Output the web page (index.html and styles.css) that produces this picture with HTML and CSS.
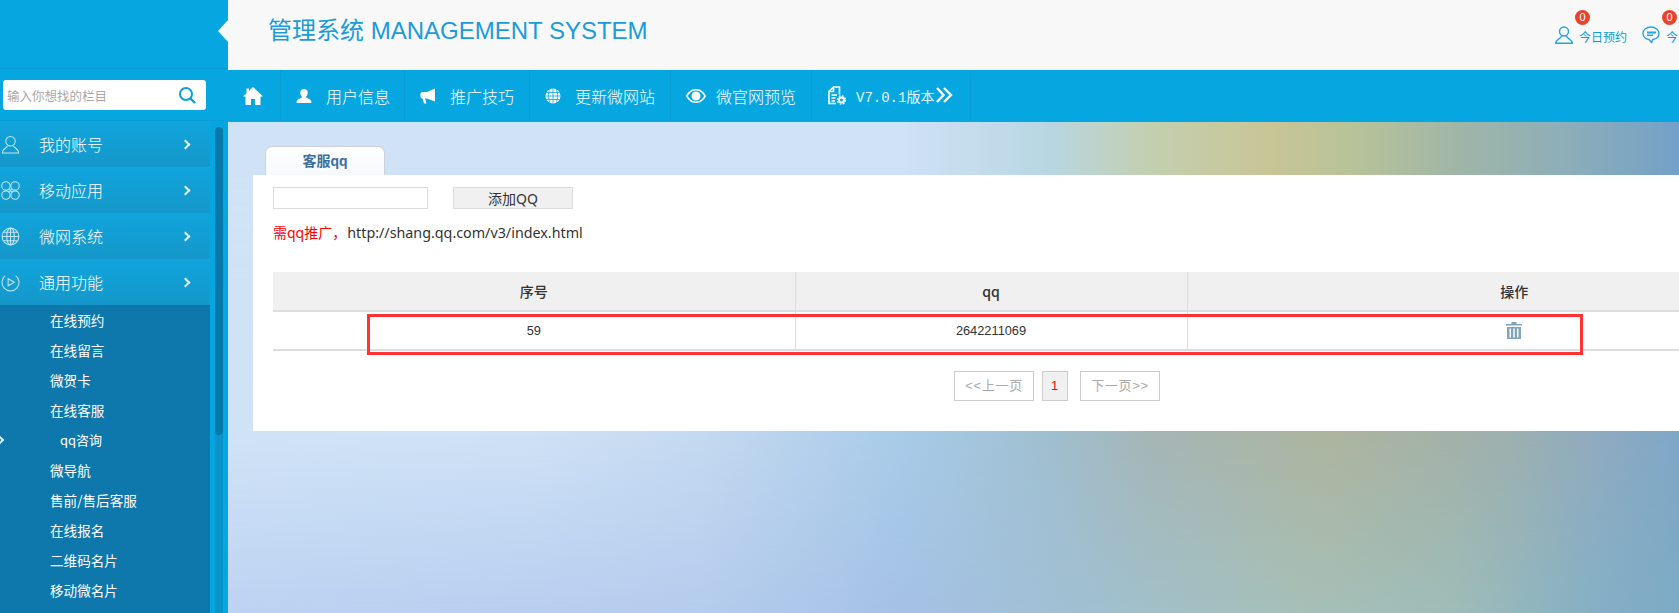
FILE: index.html
```html
<!DOCTYPE html>
<html lang="zh-CN">
<head>
<meta charset="utf-8">
<title>管理系统</title>
<link rel="stylesheet" href="styles.css">
</head>
<body>
<div class="app">
  <aside class="sidebar">
    <div class="logo-area"></div>
    <div class="search-area">
      <div class="search">
        <span class="search-text">输入你想找的栏目</span>
        <svg class="search-icon" viewBox="0 0 18 18" width="18" height="18"><circle cx="8" cy="8" r="6" fill="none" stroke="#06a0dc" stroke-width="2"/><path d="M12.5 12.5L17 17" stroke="#06a0dc" stroke-width="2.4" fill="none"/></svg>
      </div>
    </div>
    <div class="side-body">
      <nav class="menu">
        <a class="menu-item">
          <svg class="menu-icon" viewBox="0 0 20 20"><circle cx="10" cy="6.500" r="5"/><path d="M7 11.500C6 14 1.500 14 1.500 19H18.500C18.500 14 14 14 13 11.500"/></svg>
          <span class="menu-label">我的账号</span><span class="chev"></span>
        </a>
        <a class="menu-item">
          <svg class="menu-icon" viewBox="0 0 20 20"><circle cx="5.200" cy="5.200" r="4.400"/><circle cx="14.800" cy="5.200" r="4.400"/><circle cx="5.200" cy="14.800" r="4.400"/><circle cx="14.800" cy="14.800" r="4.400"/><path d="M8 8L12 12M12 8L8 12"/></svg>
          <span class="menu-label">移动应用</span><span class="chev"></span>
        </a>
        <a class="menu-item">
          <svg class="menu-icon" viewBox="0 0 20 20"><circle cx="10" cy="10" r="8.800"/><ellipse cx="10" cy="10" rx="4" ry="8.800"/><path d="M10 1.200V18.800M1.200 10H18.800M2.500 5.500H17.500M2.500 14.500H17.500"/></svg>
          <span class="menu-label">微网系统</span><span class="chev"></span>
        </a>
        <a class="menu-item">
          <svg class="menu-icon" viewBox="0 0 20 20"><path d="M15.500 2.800A9 9 0 1 1 4.500 2.800"/><path d="M7.500 6V13.500L14 9.800Z"/></svg>
          <span class="menu-label">通用功能</span><span class="chev"></span>
        </a>
        <ul class="submenu">
          <li class="sub-item">在线预约</li>
          <li class="sub-item">在线留言</li>
          <li class="sub-item">微贺卡</li>
          <li class="sub-item">在线客服</li>
          <li class="sub-item sub-current"><span class="sub-mark"></span>qq咨询</li>
          <li class="sub-item">微导航</li>
          <li class="sub-item">售前/售后客服</li>
          <li class="sub-item">在线报名</li>
          <li class="sub-item">二维码名片</li>
          <li class="sub-item">移动微名片</li>
        </ul>
      </nav>
      <div class="track"><div class="thumb"></div></div>
    </div>
  </aside>

  <div class="workspace">
    <header class="topbar">
      <h1 class="brand">管理系统 MANAGEMENT SYSTEM</h1>
      <div class="tools">
        <a class="tool">
          <svg class="tool-icon" viewBox="0 0 18 18" width="18" height="18"><circle cx="9" cy="5.500" r="4.500"/><path d="M6.500 10C6 13 1 13 .8 17.200H17.200C17 13 12 13 11.500 10"/></svg>
          <span class="tool-text">今日预约</span><span class="badge">0</span>
        </a>
        <a class="tool">
          <svg class="tool-icon" viewBox="0 0 18 18" width="18" height="18"><path d="M9 1C4.500 1 1 3.500 1 7.500S4.500 13.500 7 13.500L9.500 16.500L10.800 13.500C14 13 17 11 17 7.500S13.500 1 9 1Z"/><path class="fillbar" d="M5 5.500H14V7.500H5ZM5 8.500H11V10H5Z"/></svg>
          <span class="tool-text">今日留言</span><span class="badge">0</span>
        </a>
      </div>
    </header>

    <nav class="navbar">
      <a class="nav-item nav-home">
        <svg viewBox="0 0 20 18" width="20" height="18"><path fill="#fff" d="M10 0L20 9.500H17.500V18H12V12H8V18H2.500V9.500H0L3.500 6.200V1.500H6V3.800Z"/></svg>
      </a>
      <a class="nav-item nav-w1">
        <svg viewBox="0 0 16 14" width="16" height="14"><path fill="#fff" d="M8 0A3.700 3.700 0 0 1 11.700 3.800C11.700 6 10.500 7.500 9.800 8.200C11.500 9.500 15.500 9.500 15.500 14H.5C.5 9.500 4.500 9.500 6.200 8.200C5.500 7.500 4.300 6 4.300 3.800A3.700 3.700 0 0 1 8 0Z"/></svg>
        <span class="nav-text">用户信息</span>
      </a>
      <a class="nav-item nav-w2">
        <svg viewBox="0 0 16 16" width="16" height="16"><path fill="#fff" d="M15 .5V13.500L7 10.500H5L6.500 15.500H4L2.500 10.500C1 10.500 .3 9 .3 7.300C.3 5.500 1 4 2.500 4H7Z"/></svg>
        <span class="nav-text">推广技巧</span>
      </a>
      <a class="nav-item nav-w3">
        <svg viewBox="0 0 16 16" width="16" height="16"><circle cx="8" cy="8" r="7.500" fill="#fff"/><path fill="none" stroke="#06a7e1" stroke-width=".8" d="M8 .5V15.500M.5 8H15.500M1.500 4.500H14.500M1.500 11.500H14.500M5 .8C3 5 3 11 5 15.200M11 .8C13 5 13 11 11 15.200"/></svg>
        <span class="nav-text">更新微网站</span>
      </a>
      <a class="nav-item nav-w4">
        <svg viewBox="0 0 20 14" width="20" height="14"><path fill="#fff" fill-rule="evenodd" d="M10 0C15 0 18.500 3.500 20 7C18.500 10.500 15 14 10 14S1.500 10.500 0 7C1.500 3.500 5 0 10 0ZM10 1.500C6.500 1.500 3.500 3.500 1.800 7C3.500 10.500 6.500 12.500 10 12.500S16.500 10.500 18.200 7C16.500 3.500 13.500 1.500 10 1.500ZM10 2.500A4.500 4.500 0 1 1 10 11.500A4.500 4.500 0 0 1 10 2.500Z"/></svg>
        <span class="nav-text">微官网预览</span>
      </a>
      <a class="nav-item nav-w5">
        <svg viewBox="0 0 18 19" width="18" height="19"><path fill="none" stroke="#fff" stroke-width="1.600" d="M5.500 1H11.500V8.500M1 5.500L5.500 1V5.500H1V17.500H8"/><path stroke="#fff" stroke-width="1.400" d="M3.500 9H9M3.500 12H7.500M3.500 15H7"/><circle cx="13.500" cy="14" r="2.500" fill="none" stroke="#fff" stroke-width="2"/><circle cx="13.500" cy="14" r="4.200" fill="none" stroke="#fff" stroke-width="1.200" stroke-dasharray="1.800 1.500"/></svg>
        <span class="nav-version">V7.0.1版本</span>
        <svg class="nav-more" viewBox="0 0 17 16" width="17" height="16"><path fill="none" stroke="#fff" stroke-width="2.400" d="M1 1L7.500 8L1 15M8 1L15 8L8 15"/></svg>
      </a>
    </nav>

    <main class="main">
      <div class="tabs"><div class="tab">客服qq</div></div>
      <section class="panel">
        <div class="form-row">
          <input class="qq-input" type="text">
          <button class="add-btn" type="button">添加QQ</button>
        </div>
        <p class="notice"><span class="notice-red">需qq推广，</span>http://shang.qq.com/v3/index.html</p>
        <div class="table-wrap">
          <table class="grid">
            <colgroup><col class="col-a"><col class="col-b"><col class="col-c"></colgroup>
            <thead><tr><th>序号</th><th>qq</th><th>操作</th></tr></thead>
            <tbody><tr>
              <td>59</td><td>2642211069</td>
              <td><svg class="trash" viewBox="0 0 16 17" width="16" height="17"><path fill="#7fa6b8" d="M5.500 0H10.500V2H16V3.500H0V2H5.500ZM1 5H15V17H1ZM3.500 6.500V15.500H5V6.500ZM7.250 6.500V15.500H8.750V6.500ZM11 6.500V15.500H12.500V6.500Z" fill-rule="evenodd"/></svg></td>
            </tr></tbody>
          </table>
          <div class="annotation"></div>
          <div class="pager">
            <a class="page-btn page-wide">&lt;&lt;上一页</a>
            <a class="page-btn page-now">1</a>
            <a class="page-btn page-wide">下一页&gt;&gt;</a>
          </div>
        </div>
      </section>
    </main>
  </div>
</div>
</body>
</html>
```

FILE: styles.css
```css
* { box-sizing: border-box; }
html, body { margin: 0; height: 100%; overflow: hidden; }
body { font-family: "Liberation Sans", "Noto Sans CJK SC", sans-serif; color: #333; }

.app { display: flex; width: 1679px; height: 613px; overflow: hidden; background: #06a7e1; }

/* sidebar */
.sidebar { flex: 0 0 228px; height: 613px; display: flex; flex-direction: column; background: #06a7e1; position: relative; overflow: hidden; }
.logo-area { height: 69px; border-bottom: 1px solid #0a9cd4; flex: none; }
.search-area { height: 52px; flex: none; padding: 11px 0 0 3px; border-bottom: 1px solid #0a9cd4; }
.search { width: 203px; height: 30px; background: #fff; border-radius: 3px; display: flex; align-items: center; padding: 0 10px 0 4px; }
.search-text { flex: 1; font-size: 12.500px; color: #a8a8a8; white-space: nowrap; }
.search-icon { flex: none; }
.side-body { display: flex; flex: 1; min-height: 0; }
.menu { width: 210px; flex: none; background: #0e78ad; }
.menu-item { display: flex; align-items: center; height: 46px; background: linear-gradient(#10a5dd, #1597c9); color: #fff; padding-left: 1px; }
.menu-icon { width: 19px; height: 19px; flex: none; fill: none; stroke: #c4e6f4; stroke-width: 1.100; }
.menu-label { margin-left: 19px; font-size: 16px; width: 143px; white-space: nowrap; font-family: "Noto Sans CJK SC", sans-serif; font-weight: 300; }
.chev { width: 7px; height: 7px; border-top: 2px solid #e6f6fc; border-right: 2px solid #e6f6fc; transform: rotate(45deg); }
.submenu { list-style: none; margin: 0; padding: 0; }
.sub-item { height: 30px; line-height: 30px; padding-left: 50px; font-size: 13.600px; color: #fff; white-space: nowrap; font-family: "Noto Sans CJK SC", sans-serif; font-weight: 400; position: relative; }
.sub-current { padding-left: 60px; font-size: 13px; }
.sub-mark { position: absolute; left: -3px; top: 12px; width: 6px; height: 6px; border-top: 2px solid #d8eef8; border-right: 2px solid #d8eef8; transform: rotate(45deg); }
.track { width: 8px; margin: 6px 0 0 5px; background: #0a93c8; border-radius: 4px 4px 0 0; flex: none; }
.thumb { height: 308px; background: #0779ab; border-radius: 4px; }

/* header */
.workspace { flex: 1; min-width: 0; display: flex; flex-direction: column; position: relative; }
.workspace::before { content: ""; position: absolute; left: -10px; top: 20px; border-style: solid; border-width: 11px 10px 11px 0; border-color: transparent #f8f8f8 transparent transparent; }
.topbar { height: 70px; flex: none; background: #f8f8f8; display: flex; overflow: hidden; }
.brand { flex: 0 0 1327px; margin: 0; padding: 15px 0 0 40px; font-size: 24px; line-height: 32px; font-weight: 400; color: #1c9bd8; white-space: nowrap; }
.tools { display: flex; flex: none; gap: 15px; padding-top: 26px; }
.tool { display: flex; position: relative; height: 18px; color: #0a9fdc; }
.tool-icon { fill: none; stroke: #23a5df; stroke-width: 1.400; flex: none; }
.fillbar { fill: #23a5df; stroke: none; }
.tool-text { margin-left: 6px; font-size: 12px; line-height: 22px; white-space: nowrap; font-family: "Noto Sans CJK SC", sans-serif; font-weight: 400; }
.badge { position: absolute; left: 20px; top: -16px; width: 15px; height: 15px; border-radius: 50%; background: #e8432e; color: #fff; font-size: 11px; line-height: 15px; text-align: center; }

/* navbar */
.navbar { height: 52px; flex: none; background: #06a7e1; display: flex; }
.nav-item { display: flex; align-items: center; height: 51px; border-right: 1px solid #0a9cd4; color: #fff; }
.nav-home { width: 53px; padding-left: 15px; }
.nav-w1 { width: 124px; padding-left: 15px; }
.nav-w2 { width: 125px; padding-left: 15px; }
.nav-w3 { width: 141px; padding-left: 15px; }
.nav-w4 { width: 141px; padding-left: 15px; }
.nav-w5 { width: 159px; padding-left: 16px; }
.nav-text { margin-left: 14px; font-size: 16px; white-space: nowrap; font-family: "Noto Sans CJK SC", sans-serif; font-weight: 300; }
.nav-w4 .nav-text { margin-left: 10px; }
.nav-version { margin-left: 10px; font-size: 14px; white-space: nowrap; font-family: "Liberation Mono", "Noto Sans CJK SC", monospace; color: #e2f5fc; }
.nav-more { margin: -2px 0 0 2px; flex: none; }

/* main: three horizontal colour bands faded into each other */
.main { flex: 1; min-height: 0; padding: 24px 0 0 25px; overflow: hidden; position: relative;
  background: linear-gradient(90deg, #bdd3f2 0, #b5cdee 472px, #a5c2e6 672px, #a0c0d0 872px, #a7c0b8 1072px, #9fbdb8 1222px, #85b0c6 1372px, #7dabc5 1451px);
}
.main::before { content: ""; position: absolute; inset: 0;
  background: linear-gradient(90deg, #d0e3f6 0, #cfe1f6 300px, #c5d9f0 472px, #a8cbe8 672px, #9fbecf 822px, #a5b5b5 922px, #adb49d 1102px, #9eb0ad 1272px, #8faac0 1372px, #7fa7c6 1451px);
  -webkit-mask-image: linear-gradient(#000 309px, transparent 491px);
  mask-image: linear-gradient(#000 309px, transparent 491px);
}
.main::after { content: ""; position: absolute; inset: 0;
  background: linear-gradient(90deg, #d0e3f6 0, #d0e2f6 672px, #b8d6e2 822px, #c3cfb0 922px, #c8c596 1042px, #b8c399 1122px, #9fb5a8 1232px, #8eafb8 1332px, #74a0c9 1451px);
  -webkit-mask-image: linear-gradient(#000 53px, transparent 309px);
  mask-image: linear-gradient(#000 53px, transparent 309px);
}
.tabs { display: flex; padding-left: 12px; height: 29px; position: relative; z-index: 1; }
.tab { width: 120px; height: 29px; background: linear-gradient(#fff, #f6f9fc); border: 1px solid #cdd3d8; border-bottom: 0; border-radius: 7px 7px 0 0; text-align: center; font-size: 14px; font-weight: 700; line-height: 28px; color: #3c6f9b; }
.panel { width: 1700px; height: 256px; background: #fff; padding: 12px 0 0 20px; position: relative; z-index: 1; }
.form-row { display: flex; align-items: stretch; gap: 25px; height: 22px; }
.qq-input { width: 155px; height: 22px; border: 1px solid #ddd; background: #fff; padding: 0; margin: 0; }
.add-btn { width: 120px; height: 22px; border: 1px solid #ddd; background: #f0f0f0; font-size: 14px; font-family: "Noto Sans", "Noto Sans CJK SC", sans-serif; color: #333; padding: 0 0 2px; margin: 0; }
.notice { margin: 14px 0 0; height: 20px; font-size: 14.300px; line-height: 20px; color: #333; white-space: nowrap; font-family: "Noto Sans", "Noto Sans CJK SC", sans-serif; }
.notice-red { color: #f00; font-size: 14px; margin-right: 1px; }
.table-wrap { position: relative; width: 1568px; margin-top: 29px; }
.grid { width: 1568px; border-collapse: collapse; table-layout: fixed; }
.col-a { width: 522px; }
.col-b { width: 392px; }
.col-c { width: 654px; }
.grid th { height: 39px; background: #f0f0f0; border-right: 1px solid #ddd; border-bottom: 2px solid #ddd; font-size: 14px; font-weight: 500; color: #333; padding: 0; font-family: "Noto Sans CJK SC", sans-serif; }
.grid th:last-child, .grid td:last-child { border-right: 0; }
.grid td { height: 39px; border-right: 1px solid #ddd; border-bottom: 2px solid #ddd; font-size: 12.800px; text-align: center; color: #333; padding: 0 0 1px; }
.trash { display: block; margin: 1px auto 0; }
.annotation { position: absolute; left: 94px; top: 42px; width: 1216px; height: 41px; border: 3px solid #f33; pointer-events: none; }
.pager { display: flex; justify-content: center; gap: 8px; margin-top: 20px; }
.page-btn { height: 30px; border: 1px solid #ccc; color: #aaa; font-size: 13px; letter-spacing: .7px; line-height: 28px; text-align: center; white-space: nowrap; }
.page-wide { width: 80px; }
.page-wide:last-child { margin-left: 4px; }
.page-now { width: 26px; background: #f0f0f0; color: #f00; font-weight: 300; }
```
